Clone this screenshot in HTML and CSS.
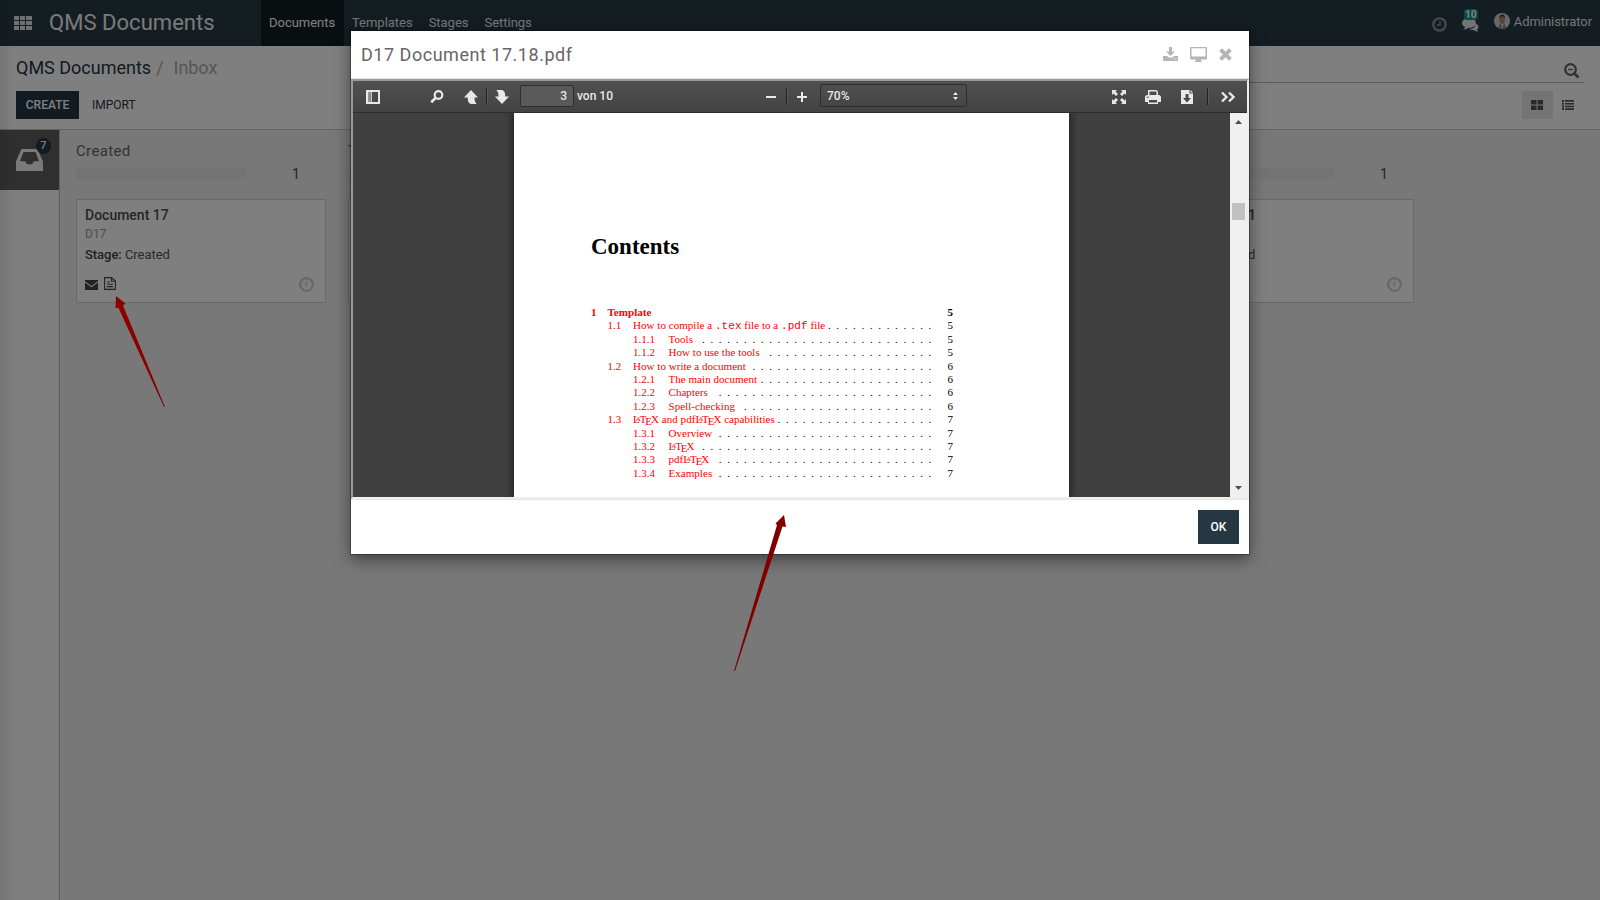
FILE: index.html
```html
<!DOCTYPE html>
<html lang="en">
<head>
<meta charset="utf-8">
<title>QMS Documents</title>
<link rel="stylesheet" href="styles.css">
</head>
<body>
<div class="app">
  <nav class="navbar">
    <svg class="apps" width="18" height="14" viewBox="0 0 18 14"><path d="M0 0h5v4H0zM6 0h5v4H6zM12 0h6v4h-6zM0 5h5v4H0zM6 5h5v4H6zM12 5h6v4h-6zM0 10h5v4H0zM6 10h5v4H6zM12 10h6v4h-6z"/></svg>
    <div class="brand">QMS Documents</div>
    <div class="menu"><a class="active">Documents</a><a>Templates</a><a>Stages</a><a>Settings</a></div>
    <div class="systray">
      <svg class="clock" width="15" height="15" viewBox="0 0 15 15"><circle cx="7.5" cy="7.5" r="6.2" fill="none" stroke="currentColor" stroke-width="2.2"/><path d="M8 4v4H5" fill="none" stroke="currentColor" stroke-width="1.3"/></svg>
      <div class="chat">
        <svg width="18" height="15" viewBox="0 0 18 15"><path d="M12.500 6.500C15 7 16.500 8 16.500 9.800c0 1.200-.6 2-1.500 2.700l1 2c-1.500 0-2.700-.6-3.500-1.300-2 .1-4-.3-5.200-1.400 3.500.1 7-1.500 5.200-5.300z"/><ellipse cx="7" cy="6" rx="7" ry="5"/><path d="M3 9.500c0 1.500-.6 2.300-1.600 3 2.200.2 4-.6 5-2.200z"/></svg>
        <span class="badge">10</span>
      </div>
      <div class="user">
        <svg width="16" height="16" viewBox="0 0 16 16"><circle cx="8" cy="8" r="8" fill="#d0d0d4"/><path d="M4 14.800 6 10.500h4.500l2 4.200A8 8 0 0 1 4 14.800z" fill="#8b8d99"/><path d="M7.300 11h2l-.8 4.800z" fill="#eee"/><ellipse cx="8.200" cy="6.300" rx="2.700" ry="4.600" fill="#b98568"/><path d="M5.300 5.500C5 .5 11.500 0 11 5.500 10 2.500 7 2.500 5.300 5.500z" fill="#4d342b"/></svg>
        <span>Administrator</span>
      </div>
    </div>
  </nav>
  <header class="panel">
    <div class="panel-top">
      <div class="crumbs"><span>QMS Documents</span><i>/</i><em>Inbox</em></div>
      <div class="search"><svg width="16" height="16" viewBox="0 0 16 16"><g fill="none" stroke="currentColor"><circle cx="6.500" cy="6.500" r="5.300" stroke-width="2.200"/><path d="M4 6.500h5" stroke-width="1.300"/><path d="m10.500 10.500 4 4" stroke-width="2.800"/></g></svg></div>
    </div>
    <div class="panel-bottom">
      <button class="primary">CREATE</button><button class="link">IMPORT</button>
      <div class="views">
        <span class="view on"><svg width="12" height="10" viewBox="0 0 12 10"><path d="M0 0h5.500v4.500H0zM6.500 0H12v4.500H6.500zM0 5.500h5.500V10H0zM6.500 5.500H12V10H6.500z"/></svg></span>
        <span class="view"><svg width="12" height="10" viewBox="0 0 12 10"><path d="M0 0h2v2H0zM3 0h9v1.700H3zM0 2.700h2v2H0zM3 2.900h9v1.600H3zM0 5.400h2v2H0zM3 5.700h9v1.600H3zM0 8h2v2H0zM3 8.300h9V10H3z"/></svg></span>
      </div>
    </div>
  </header>
  <main class="body">
    <aside class="sidebar"><div class="inbox">
      <svg width="27" height="22" viewBox="0 0 27 22"><path fill-rule="evenodd" d="M5.500 0h16L27 12.500V22H0V12.500zM7.500 3 4 12.300h5.200l1.700 3h5.200l1.700-3H23L19.500 3z"/></svg><span class="count">7</span></div></aside>
    <section class="board">
      <div class="column">
        <h2>Created</h2>
        <div class="progress"><div class="bar"></div><b>1</b></div>
        <article class="card">
          <h3>Document 17</h3><p class="code">D17</p><p class="stage"><b>Stage:</b> Created</p>
          <div class="actions">
            <svg width="13" height="10" viewBox="0 0 13 10"><path d="M0 0h13v1.300L6.500 6 0 1.300zM0 2.600 6.500 7.200 13 2.600V10H0z"/></svg>
            <svg class="file" width="12" height="13" viewBox="0 0 12 13"><path d="M.6.600h7L11.400 4v8.400H.6zM7.500.600V4.200h3.900M3 5h3M3 7.300h6M3 9.600h6" fill="none" stroke="currentColor" stroke-width="1.100"/></svg>
            <svg class="clock" width="15" height="15" viewBox="0 0 15 15"><circle cx="7.500" cy="7.500" r="6.300" fill="none" stroke="currentColor" stroke-width="2.200"/><path d="M8 4v4H5" fill="none" stroke="currentColor" stroke-width="1.200"/></svg>
          </div>
        </article>
      </div>
      <div class="column"><h2>T</h2><div class="progress"><div class="bar"></div></div><article class="card"></article></div>
      <div class="column"></div>
      <div class="column"></div>
      <div class="column last">
        <h2></h2>
        <div class="progress"><div class="bar"></div><b>1</b></div>
        <article class="card">
          <h3>1</h3><p class="code"></p><p class="stage">d</p>
          <div class="actions"><svg class="clock" width="15" height="15" viewBox="0 0 15 15"><circle cx="7.500" cy="7.500" r="6.300" fill="none" stroke="currentColor" stroke-width="2.200"/><path d="M8 4v4H5" fill="none" stroke="currentColor" stroke-width="1.200"/></svg></div>
        </article>
      </div>
    </section>
  </main>
</div>
<div class="backdrop">
  <div class="modal">
    <div class="modal-head">
      <h1>D17 Document 17.18.pdf</h1>
      <svg width="15" height="14" viewBox="0 0 15 14"><path d="M6 0h3v4.500h3L7.500 9 3 4.500h3zM0 9h4l2 1.500h3L11 9h4v5H0zm10 2.200v1h1v-1zm2.300 0v1h1v-1z" fill-rule="evenodd"/></svg>
      <svg width="17" height="15" viewBox="0 0 17 15"><path fill-rule="evenodd" d="M1 0h15q1 0 1 1v10.500q0 1-1 1h-5V14h.8v1H5v-1h.8v-1.500H1q-1 0-1-1V1q0-1 1-1zm.5 1.300V9.500h14V1.300z"/></svg>
      <svg width="13" height="13" viewBox="0 0 12 12"><path d="m1.500 1.500 9 9m0-9-9 9" stroke="currentColor" stroke-width="3.700"/></svg>
    </div>
    <div class="frame">
      <div class="toolbar">
        <div class="tools-left">
          <svg class="side" width="14" height="14" viewBox="0 0 14 14"><path fill-rule="evenodd" d="M0 0h14v14H0zM2 2v10h10V2z"/><path d="M2 2h2.500v10H2z" opacity=".45"/><path d="M4.800 2h1v10h-1z"/></svg>
          <svg class="find" width="14" height="14" viewBox="0 0 14 14"><circle cx="8.500" cy="5" r="3.800" fill="none" stroke="currentColor" stroke-width="2.200"/><path d="M5.800 7.800 1.200 12.300" stroke="currentColor" stroke-width="2.600"/></svg>
          <svg class="up" width="14" height="14" viewBox="0 0 14 14"><path d="M7 0 14 7.500h-3.500c0 3 .5 4.700 2.200 6.500H8C4.800 14 3.700 11.500 3.700 7.500H0z"/></svg>
          <span class="sep"></span>
          <svg class="down" width="14" height="14" viewBox="0 0 14 14"><path d="M7 14 0 6.500h3.500C3.500 3.500 3 1.800 1.300 0H6c3.200 0 4.300 2.500 4.300 6.500H14z"/></svg>
          <span class="pagebox">3</span><span class="of">von 10</span>
        </div>
        <div class="tools-mid">
          <svg width="10" height="10" viewBox="0 0 10 10"><path d="M0 4h10v2H0z"/></svg>
          <span class="sep"></span>
          <svg class="plus" width="10" height="10" viewBox="0 0 10 10"><path d="M4 0h2v4h4v2H6v4H4V6H0V4h4z"/></svg>
          <span class="zoom">70%<svg width="5" height="8" viewBox="0 0 5 8"><path d="M2.500 0 5 3H0zM0 5h5L2.500 8z"/></svg></span>
        </div>
        <div class="tools-right">
          <svg width="14" height="14" viewBox="0 0 14 14"><path d="M0 0h5L3.500 1.500 6 4 4 6 1.500 3.500 0 5zM14 0v5l-1.500-1.500L10 6 8 4l2.500-2.500L9 0zM0 14V9l1.500 1.500L4 8l2 2-2.500 2.500L5 14zM14 14H9l1.500-1.500L8 10l2-2 2.500 2.500L14 9z"/></svg>
          <svg class="print" width="16" height="14" viewBox="0 0 16 14"><path fill-rule="evenodd" d="M3.500 0h8L13 1.500V5h1.500L16 6.500V12h-3v2H3v-2H0V6.500L1.500 5H3V.5zM4.500 1.500V5h7V1.500zM4 10v2.500h8V10zM1.800 6.800v1h2v-1z"/></svg>
          <svg class="save" width="12" height="14" viewBox="0 0 12 14"><path fill-rule="evenodd" d="M0 0h8.500v3.500H12V14H0zM4.500 4v4H2L6 12.500 10 8H7.500V4z"/><path d="M9.500 0 12 2.500H9.500z"/></svg>
          <span class="sep"></span>
          <svg class="more" width="14" height="10" viewBox="0 0 14 10"><path d="m1 .500 4.500 4.500L1 9.500M8 .500 12.500 5 8 9.500" fill="none" stroke="currentColor" stroke-width="2.300"/></svg>
        </div>
      </div>
      <div class="viewer">
        <div class="page">
          <h4>Contents</h4>
          <ol class="toc">
            <li class="chap"><span class="n">1</span><span class="t">Template</span><span class="p">5</span></li>
            <li class="sec"><span class="n">1.1</span><span class="t">How to compile a <code>.tex</code> file to a <code>.pdf</code> file</span><span class="d">.............</span><span class="p">5</span></li>
            <li class="sub"><span class="n">1.1.1</span><span class="t">Tools</span><span class="d">............................</span><span class="p">5</span></li>
            <li class="sub"><span class="n">1.1.2</span><span class="t">How to use the tools</span><span class="d">....................</span><span class="p">5</span></li>
            <li class="sec"><span class="n">1.2</span><span class="t">How to write a document</span><span class="d">......................</span><span class="p">6</span></li>
            <li class="sub"><span class="n">1.2.1</span><span class="t">The main document</span><span class="d">.....................</span><span class="p">6</span></li>
            <li class="sub"><span class="n">1.2.2</span><span class="t">Chapters</span><span class="d">..........................</span><span class="p">6</span></li>
            <li class="sub"><span class="n">1.2.3</span><span class="t">Spell-checking</span><span class="d">.......................</span><span class="p">6</span></li>
            <li class="sec"><span class="n">1.3</span><span class="t"><span class="tex">L<sup>A</sup>T<sub>E</sub>X</span> and pdf<span class="tex">L<sup>A</sup>T<sub>E</sub>X</span> capabilities</span><span class="d">...................</span><span class="p">7</span></li>
            <li class="sub"><span class="n">1.3.1</span><span class="t">Overview</span><span class="d">..........................</span><span class="p">7</span></li>
            <li class="sub"><span class="n">1.3.2</span><span class="t"><span class="tex">L<sup>A</sup>T<sub>E</sub>X</span></span><span class="d">............................</span><span class="p">7</span></li>
            <li class="sub"><span class="n">1.3.3</span><span class="t">pdf<span class="tex">L<sup>A</sup>T<sub>E</sub>X</span></span><span class="d">..........................</span><span class="p">7</span></li>
            <li class="sub"><span class="n">1.3.4</span><span class="t">Examples</span><span class="d">..........................</span><span class="p">7</span></li>
          </ol>
        </div>
        <div class="scroll">
          <svg width="7" height="4" viewBox="0 0 7 4"><path d="M3.500 0 7 4H0z"/></svg>
          <span class="thumb"></span>
          <svg class="bottom" width="7" height="4" viewBox="0 0 7 4"><path d="M0 0h7L3.500 4z"/></svg>
        </div>
      </div>
    </div>
    <div class="modal-foot"><button class="primary">OK</button></div>
  </div>
</div>
<svg class="arrows" width="1600" height="900" viewBox="0 0 1600 900"><path fill="#8b0000" d="M116 296 125.500 303.500 123 305.500 165 407 164 407 118.500 308 115.500 308z"/><path fill="#800000" d="M784 515 786 527 782.500 526.500 735 671 734 671 777 525 775.500 523.500z"/></svg>
</body>
</html>
```
FILE: styles.css
```css
* { box-sizing: border-box; }
body { margin: 0; width: 1600px; height: 900px; overflow: hidden; font: 13px/20px Roboto, sans-serif; color: #666; background: #f0f0f0; }
h1, h2, h3, h4, p, ol { margin: 0; padding: 0; font-weight: 400; }
svg { display: block; fill: currentColor; flex: none; }
button { border: 0; padding: 0; font: 500 12px/28px Roboto, sans-serif; }
.app { height: 900px; display: flex; flex-direction: column; }

.navbar { height: 46px; flex: none; background: #293a44; color: #fff; display: flex; align-items: center; padding: 0 8px 0 14px; }
.apps { color: #e0e0e0; }
.brand { width: 229px; padding-left: 17px; font-size: 22px; line-height: 44px; letter-spacing: .04px; color: #f4f4f4; }
.menu { display: flex; height: 46px; line-height: 45px; color: #eee; letter-spacing: -.02px; }
.menu a { padding: 0 8px; }
.menu .active { width: 83px; background: #131d22; color: #fff; }
.systray { margin-left: auto; display: flex; align-items: center; height: 46px; color: #e8e8e8; }
.systray .clock { margin: 2px 15px 0 0; color: #92999d; }
.chat { position: relative; margin: 3px 14px 0 0; }
.badge { position: absolute; left: 2px; top: -8px; width: 14px; height: 11px; border-radius: 3px; background: #11968c; color: #fff; font: 700 10px/11px Roboto, sans-serif; text-align: center; }
.user { display: flex; gap: 4px; line-height: 17px; margin-bottom: 4px; letter-spacing: -.05px; }

.panel { height: 84px; flex: none; background: #fff; border-bottom: 1px solid #c8c8c8; padding: 0 16px; }
.panel-top { display: flex; height: 45px; }
.crumbs { flex: 1; font-size: 18px; line-height: 43px; color: #243742; }
.crumbs i { font-style: normal; color: #aaa; margin: 0 10px 0 5px; }
.crumbs em { font-style: normal; color: #aaa; letter-spacing: -.05px; }
.search { width: 776px; height: 37px; border-bottom: 1px solid #bbb; display: flex; justify-content: flex-end; padding: 17px 4px 0 0; color: #666; }
.panel-bottom { display: flex; }
.primary { background: #243742; color: #fff; }
.panel .primary { width: 63px; height: 28px; }
.link { background: none; color: #243742; margin-left: 13px; font-weight: 400; }
.views { margin-left: auto; display: flex; color: #555; }
.view { width: 31px; height: 28px; display: grid; place-items: center; padding-right: 1px; }
.view.on { background: #e9e9e9; }

.body { flex: 1; display: flex; }
.sidebar { width: 60px; border-right: 1px solid #bcbcbc; background: #fdfdfd; }
.inbox { position: relative; height: 60px; background: #5e5e5e; color: #f4f4f4; padding: 19px 16px; }
.count { position: absolute; left: 36px; top: 8px; width: 15px; height: 16px; border-radius: 8px; background: #243742; font: 500 11px/15px Roboto, sans-serif; text-align: center; }
.board { flex: 1; display: flex; }
.column { width: 272px; padding: 10px 6px 0 16px; flex: none; }
.column h2 { font-size: 15px; line-height: 22px; height: 28px; letter-spacing: .35px; }
.progress { display: flex; height: 12px; align-items: center; }
.bar { width: 170px; height: 12px; background: #e8e8e8; }
.progress b { margin-left: 46px; font-size: 14px; font-weight: 400; color: #444; }
.card { margin-top: 19px; height: 104px; background: #fff; border: 1px solid #d2d2d2; padding: 5px 11px 0 8px; display: flex; flex-direction: column; }
.card h3 { font-weight: 500; font-size: 14px; line-height: 20px; height: 21px; color: #4c4c4c; }
.code { font-size: 12px; line-height: 17px; height: 17px; color: #999; }
.stage { line-height: 20px; height: 20px; margin-top: 2px; color: #555; letter-spacing: -.04px; }
.stage b { font-weight: 500; color: #444; }
.actions { display: flex; align-items: center; margin-top: 12px; color: #444; }
.file { margin: -2px 0 0 6px; }
.actions .clock { margin-left: auto; color: #cfcfcf; }
.last h3, .last .stage { padding-left: 75px; }

.backdrop { position: absolute; inset: 0 auto auto 0; width: 1600px; height: 900px; background: linear-gradient(90deg, rgba(0,0,0,.08), transparent 14px) rgba(0,0,0,.5); padding: 31px 351px; }
.modal { width: 898px; height: 523px; background: #fff; box-shadow: 0 5px 15px rgba(0,0,0,.5), 0 0 0 1px rgba(0,0,0,.3); }
.modal-head { height: 48px; border-bottom: 1px solid #e5e5e5; display: flex; align-items: center; padding: 0 17px 1px 10px; color: #b5b5b5; gap: 12px; }
.modal-head h1 { flex: 1; font-size: 18px; line-height: 47px; color: #666; letter-spacing: .52px; }
.frame { height: 420px; border: 2px solid; border-color: #9a9a9a #eee #eee #9a9a9a; }
.toolbar { height: 32px; background: linear-gradient(#505050, #434343); border-bottom: 1px solid #2d2d2d; color: #e8e8e8; display: flex; font: 500 12px/30px Roboto, sans-serif; }
.toolbar > div { display: flex; align-items: center; }
.tools-left { padding-left: 13px; }
.find { margin-left: 50px; }
.up { margin-left: 20px; }
.sep { width: 1px; height: 17px; background: #222; box-shadow: 1px 0 #5a5a5a; }
.up + .sep { margin: 0 8px; }
.pagebox { margin: -2px 0 0 11px; width: 54px; height: 22px; border: 1px solid #2e2e2e; background: #5a5a5a; text-align: right; padding-right: 6px; line-height: 20px; border-radius: 2px; }
.of { margin-left: 3px; line-height: 28px; margin-top: -2px; }
.tools-mid { margin-left: 153px; }
.tools-mid .sep { margin: 0 10px; }
.zoom { margin: -2px 0 0 13px; width: 147px; height: 23px; border: 1px solid #2e2e2e; border-radius: 2px; display: flex; align-items: center; justify-content: space-between; padding: 0 8px 0 6px; line-height: 20px; }
.tools-right { margin-left: auto; padding-right: 12px; }
.print { margin-left: 19px; }
.save { margin-left: 20px; }
.save + .sep { margin: 0 13px 0 14px; }
.viewer { height: 384px; background: #404040; display: flex; overflow: hidden; }
.page { margin-left: 161px; width: 555px; height: 384px; background: #fff; box-shadow: 0 0 8px 2px rgba(0,0,0,.5); font-family: "Liberation Serif", serif; padding: 120px 116px 0 77px; clip-path: inset(0 -10px); }
.page h4 { font-size: 23px; line-height: 28px; height: 73px; font-weight: 700; color: #000; }
.toc { list-style: none; font-size: 11px; line-height: 13.4px; color: #f00; }
.toc li { display: flex; height: 13.4px; white-space: nowrap; }
.toc .t { letter-spacing: .04px; }
.toc .chap { font-weight: 700; }
.chap .n { width: 16.500px; }
.sec { padding-left: 16.500px; }
.sec .n { width: 25.500px; }
.sub { padding-left: 42px; }
.sub .n { width: 35.500px; }
.d { margin-left: auto; color: #000; letter-spacing: 5.640px; }
.p { color: #000; width: 16px; text-align: right; }
.chap .p { margin-left: auto; }
.toc code { font: 11px/10px "Liberation Mono", monospace; }
.tex sup { font-size: 7px; line-height: 0; vertical-align: 2px; margin: 0 -1.200px 0 -4px; }
.tex sub { font-size: 11px; line-height: 0; vertical-align: -2px; margin: 0 -1.100px; }
.scroll { margin-left: auto; width: 17px; background: #f0f0f0; color: #505050; display: flex; flex-direction: column; align-items: center; padding: 7px 0; }
.thumb { width: 13px; height: 17px; margin-top: 79px; background: #c1c1c1; }
.bottom { margin-top: auto; }
.modal-foot { height: 55px; border-top: 1px solid #e5e5e5; padding: 10px 10px 0 0; display: flex; justify-content: flex-end; }
.modal-foot .primary { width: 41px; height: 34px; }

/* Annotation arrows lie over the whole window. */
.arrows { position: absolute; left: 0; top: 0; }
```
